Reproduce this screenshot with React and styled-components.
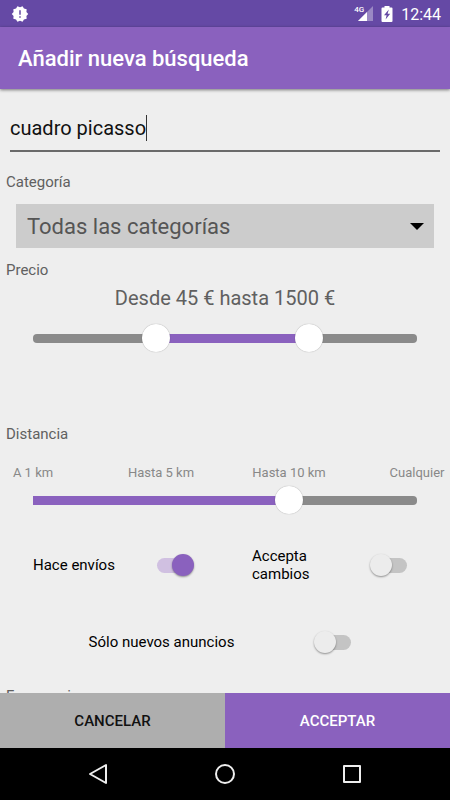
import { useState } from 'react';
import styled, { createGlobalStyle } from 'styled-components';

const GlobalStyle = createGlobalStyle`
  * {
    box-sizing: border-box;
  }

  body {
    margin: 0;
    background: #eeeeee;
    font-family: Roboto, sans-serif;
  }

  button, input, select {
    font-family: inherit;
  }
`;

const Screen = styled.div`
  display: flex;
  flex-direction: column;
  height: 100vh;
`;

//Barra de estado
const StatusBar = styled.div`
  display: flex;
  align-items: center;
  flex: none;
  height: 27px;
  padding: 0 9px 0 11px;
  background: #6549a5;
  color: #fff;
`;

const StatusIcons = styled.div`
  display: flex;
  align-items: center;
  gap: 8px;
  margin-left: auto;
`;

const Signal = styled.div`
  display: flex;
  align-items: flex-start;
`;

const Network = styled.span`
  margin-right: -6px;
  font-size: 8px;
  line-height: 8px;
  font-weight: 500;
`;

const Time = styled.span`
  font-size: 16px;
  line-height: 20px;
  padding-top: 2px;
`;

//Cabecera
const AppBar = styled.header`
  position: relative;
  flex: none;
  padding: 2px 18px 0;
  background: #8a61be;
  box-shadow: 0 1px 3px rgba(0, 0, 0, 0.5);
`;

const Title = styled.h1`
  margin: 0;
  color: #fff;
  font-size: 22px;
  line-height: 60px;
  font-weight: 500;
`;

//Formulario
const Form = styled.form`
  display: flex;
  flex: 1;
  flex-direction: column;
  min-height: 0;
`;

const Content = styled.main`
  flex: 1;
  min-height: 0;
  padding-bottom: 16px;
  overflow-y: auto;
  scrollbar-width: none;
`;

const SearchField = styled.div`
  display: flex;
  align-items: center;
  height: 48px;
  margin: 15px 10px 20px;
  padding-top: 2px;
  border-bottom: 2px solid #6a6a6a;
`;

const SearchInput = styled.input`
  field-sizing: content;
  min-width: 1px;
  max-width: 100%;
  padding: 0;
  border: 0;
  outline: 0;
  background: none;
  caret-color: transparent;
  color: #111;
  font-size: 20px;
  line-height: 24px;
`;

const Caret = styled.span`
  width: 1px;
  height: 26px;
  background: #333;
`;

const SectionLabel = styled.label`
  display: block;
  padding: 0 6px;
  color: #606060;
  font-size: 15px;
  line-height: 20px;
`;

const SelectBox = styled.div`
  display: grid;
  align-items: center;
  margin: 12px 16px;
  background: #cccccc;
`;

const Select = styled.select`
  grid-area: 1 / 1;
  appearance: none;
  height: 44px;
  padding: 0 40px 0 11px;
  border: 0;
  border-radius: 0;
  background: none;
  color: #555;
  font-size: 22px;
`;

const Arrow = styled.svg`
  grid-area: 1 / 1;
  justify-self: end;
  margin-right: 10px;
  pointer-events: none;
`;

const PriceText = styled.output`
  display: block;
  margin: 6px 0 14px;
  color: #606060;
  font-size: 20px;
  line-height: 24px;
  text-align: center;
`;

const SliderBox = styled.div`
  display: grid;
  align-items: center;
  height: 28px;
  padding: 0 19px;
  margin-bottom: ${({ $space }) => $space || 0}px;
`;

const Track = styled.div`
  grid-area: 1 / 1;
  height: 9px;
  margin: 0 14px;
  border-radius: 0 4px 4px 0;
  border-top-left-radius: ${({ $round }) => ($round ? '4px' : '0')};
  border-bottom-left-radius: ${({ $round }) => ($round ? '4px' : '0')};
  background: #8a8a8a;
`;

const Fill = styled.div`
  height: 9px;
  background: #8a61be;
`;

const Range = styled.input`
  grid-area: 1 / 1;
  appearance: none;
  width: 100%;
  height: 28px;
  margin: 0;
  background: none;
  pointer-events: none;

  &::-webkit-slider-thumb {
    appearance: none;
    width: 28px;
    height: 28px;
    border: 0;
    border-radius: 50%;
    background: #fff;
    box-shadow: 0 0 1px rgba(0, 0, 0, 0.4);
    pointer-events: auto;
  }
`;

const Marks = styled.div`
  display: flex;
  justify-content: space-between;
  padding: 0 33px;
  margin: 20px 0 4px;
`;

const Mark = styled.span`
  display: flex;
  justify-content: center;
  width: 0;
  color: #888;
  font-size: 13px;
  line-height: 18px;
  white-space: nowrap;
`;

const SwitchRow = styled.div`
  display: flex;
  height: 36px;
  margin-bottom: ${({ $space }) => $space}px;
`;

const SwitchItem = styled.label`
  display: flex;
  width: ${({ $center }) => ($center ? '100%' : '50%')};
  align-items: center;
  justify-content: ${({ $center }) => ($center ? 'center' : 'space-between')};
  gap: ${({ $center }) => ($center ? '80px' : '0')};
  padding: ${({ $pad }) => $pad};
  color: #000;
  font-size: 15px;
  line-height: 18px;
`;

const SwitchText = styled.span`
  max-width: ${({ $narrow }) => ($narrow ? '80px' : 'none')};
`;

const Switch = styled.input.attrs({ type: 'checkbox' })`
  appearance: none;
  display: grid;
  flex: none;
  align-items: center;
  width: 37px;
  height: 22px;
  margin: 0;

  &::before {
    content: '';
    grid-area: 1 / 1;
    height: 15px;
    margin: 0 0 0 3px;
    border-radius: 8px;
    background: #c4c4c4;
  }

  &::after {
    content: '';
    grid-area: 1 / 1;
    width: 22px;
    height: 22px;
    border-radius: 50%;
    background: #ececec;
    box-shadow: 0 1px 2px rgba(0, 0, 0, 0.4);
  }

  &:checked::before {
    margin: 0 3px 0 0;
    background: #d0c0e1;
  }

  &:checked::after {
    justify-self: end;
    background: #8a61be;
  }
`;

//Botones
const Actions = styled.div`
  display: flex;
  flex: none;
  height: 55px;
`;

const ActionButton = styled.button`
  flex: 1;
  border: 0;
  background: ${({ $primary }) => ($primary ? '#8a61be' : '#aeaeae')};
  color: ${({ $primary }) => ($primary ? '#fff' : '#111')};
  font-size: 15px;
  font-weight: 500;
  text-transform: uppercase;
`;

//Barra de navegación
const NavBar = styled.nav`
  display: flex;
  flex: none;
  align-items: center;
  justify-content: center;
  gap: 99px;
  height: 52px;
  background: #000;
`;

const NavButton = styled.button`
  display: flex;
  padding: 0;
  border: 0;
  background: none;
`;

const PRICES = [
  0, 5, 10, 15, 20, 25, 30, 40, 45, 60, 80, 100, 150, 200, 300, 500, 750, 1000,
  1500, 2000, 3000, 5000, 7500, 10000, 15000, 20000,
];
const LAST_PRICE = PRICES.length - 1;

const DISTANCES = ['A 1 km', 'Hasta 5 km', 'Hasta 10 km', 'Cualquier'];
const LAST_DISTANCE = DISTANCES.length - 1;

const App = () => {
  const [query, setQuery] = useState('cuadro picasso');
  const [from, setFrom] = useState(8);
  const [to, setTo] = useState(18);
  const [distance, setDistance] = useState(2);

  return (
    <Screen>
      <GlobalStyle />
      <StatusBar>
        <svg width="18" height="18" viewBox="0 0 24 24">
          <path
            fill="#fff"
            d="M23 12l-2.44-2.78.34-3.68-3.61-.82-1.89-3.18L12 3 8.6 1.54 6.71 4.72l-3.61.81.34 3.68L1 12l2.44 2.78-.34 3.69 3.61.82 1.89 3.18L12 21l3.4 1.46 1.89-3.18 3.61-.82-.34-3.68L23 12zm-10 5h-2v-2h2v2zm0-4h-2V7h2v6z"
          />
        </svg>
        <StatusIcons>
          <Signal>
            <Network>4G</Network>
            <svg width="15" height="15" viewBox="0 0 15 15">
              <path d="M0 15L15 0V15Z" fill="#fff" fillOpacity="0.35" />
              <path d="M0 15L9 6V15Z" fill="#fff" />
            </svg>
          </Signal>
          <svg width="12" height="16" viewBox="0 0 12 16">
            <path
              fill="#fff"
              fillRule="evenodd"
              d="M3.5 0H8.5V1.5H10.5Q11.5 1.5 11.5 2.5V15Q11.5 16 10.5 16H1.5Q.5 16 .5 15V2.5Q.5 1.5 1.5 1.5H3.5ZM7.8 3.5L3 9.2H5.6L4.6 13.5L9.2 7.8H6.6Z"
            />
          </svg>
          <Time>12:44</Time>
        </StatusIcons>
      </StatusBar>
      <AppBar>
        <Title>Añadir nueva búsqueda</Title>
      </AppBar>
      <Form onSubmit={(e) => e.preventDefault()}>
        <Content>
          <SearchField>
            <SearchInput
              type="text"
              aria-label="Búsqueda"
              value={query}
              onChange={(e) => setQuery(e.target.value)}
            />
            <Caret />
          </SearchField>

          <SectionLabel htmlFor="category">Categoría</SectionLabel>
          <SelectBox>
            <Select id="category">
              <option>Todas las categorías</option>
            </Select>
            <Arrow width="14" height="7" viewBox="0 0 14 7">
              <path d="M0 0H14L7 7Z" />
            </Arrow>
          </SelectBox>

          <SectionLabel htmlFor="price-from">Precio</SectionLabel>
          <PriceText>
            Desde {PRICES[from]} € hasta {PRICES[to]} €
          </PriceText>
          <SliderBox $space={72}>
            <Track $round>
              <Fill
                style={{
                  marginLeft: `${(from / LAST_PRICE) * 100}%`,
                  width: `${((to - from) / LAST_PRICE) * 100}%`,
                }}
              />
            </Track>
            <Range
              id="price-from"
              type="range"
              max={LAST_PRICE}
              value={from}
              onChange={(e) => setFrom(Math.min(Number(e.target.value), to))}
            />
            <Range
              type="range"
              aria-label="Precio hasta"
              max={LAST_PRICE}
              value={to}
              onChange={(e) => setTo(Math.max(Number(e.target.value), from))}
            />
          </SliderBox>

          <SectionLabel htmlFor="distance">Distancia</SectionLabel>
          <Marks>
            {DISTANCES.map((text) => (
              <Mark key={text}>{text}</Mark>
            ))}
          </Marks>
          <SliderBox $space={33}>
            <Track>
              <Fill style={{ width: `${(distance / LAST_DISTANCE) * 100}%` }} />
            </Track>
            <Range
              id="distance"
              type="range"
              max={LAST_DISTANCE}
              value={distance}
              onChange={(e) => setDistance(Number(e.target.value))}
            />
          </SliderBox>

          <SwitchRow $space={41}>
            <SwitchItem $pad="0 31px 0 33px">
              <SwitchText>Hace envíos</SwitchText>
              <Switch defaultChecked />
            </SwitchItem>
            <SwitchItem $pad="0 43px 0 27px">
              <SwitchText $narrow>Accepta cambios</SwitchText>
              <Switch />
            </SwitchItem>
          </SwitchRow>
          <SwitchRow $space={26}>
            <SwitchItem $center $pad="0 10px 0 0">
              <SwitchText>Sólo nuevos anuncios</SwitchText>
              <Switch />
            </SwitchItem>
          </SwitchRow>

          <SectionLabel as="div">Frecuencia</SectionLabel>
        </Content>
        <Actions>
          <ActionButton type="button">Cancelar</ActionButton>
          <ActionButton type="submit" $primary>
            Acceptar
          </ActionButton>
        </Actions>
      </Form>
      <NavBar>
        <NavButton aria-label="Atrás">
          <svg width="28" height="28" viewBox="0 0 28 28">
            <path
              d="M22 5V23L6 14Z"
              fill="none"
              stroke="#eee"
              strokeWidth="2"
              strokeLinejoin="round"
            />
          </svg>
        </NavButton>
        <NavButton aria-label="Inicio">
          <svg width="28" height="28" viewBox="0 0 28 28">
            <circle cx="14" cy="14" r="9" fill="none" stroke="#eee" strokeWidth="2" />
          </svg>
        </NavButton>
        <NavButton aria-label="Recientes">
          <svg width="28" height="28" viewBox="0 0 28 28">
            <rect
              x="6"
              y="6"
              width="16"
              height="16"
              fill="none"
              stroke="#eee"
              strokeWidth="2"
              strokeLinejoin="round"
            />
          </svg>
        </NavButton>
      </NavBar>
    </Screen>
  );
};

export default App;
